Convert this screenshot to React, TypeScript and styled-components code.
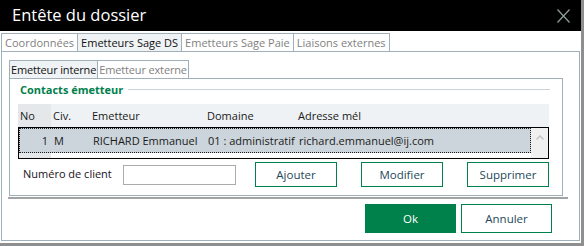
import React from 'react';
import styled, { createGlobalStyle, css } from 'styled-components';

const GREEN = '#00804b';
const TAB_BORDER = '#9fb0ba';
const UI_FONT = '"Open Sans", "Noto Sans", sans-serif';

const GlobalStyle = createGlobalStyle`
  html, body {
    margin: 0;
    padding: 0;
    background: #ffffff;
  }
  body {
    font-family: ${UI_FONT};
    font-size: 11px;
    color: #1a1a1a;
  }
`;

const Window = styled.div`
  width: 581px;
  height: 243px;
  border-right: 3px solid #8f8f8f;
  border-bottom: 3px solid #8f8f8f;
  background: #ffffff;
  display: flex;
  flex-direction: column;
`;

const TitleBar = styled.div`
  height: 31px;
  flex: none;
  background: #000000;
  display: flex;
  align-items: center;
  justify-content: space-between;
  padding: 0 11px 0 12px;
`;

const Title = styled.span`
  color: #ffffff;
  font-size: 16.5px;
  font-weight: 400;
  line-height: 1;
  margin-top: -1px;
`;

const Body = styled.div`
  flex: 1;
  display: flex;
  flex-direction: column;
  padding: 2px 1px 0 1px;
`;

const TabStrip = styled.div`
  display: flex;
  height: 18px;
`;

const Tab = styled.div<{ $active?: boolean; $compact?: boolean }>`
  height: 18px;
  box-sizing: border-box;
  border: 1px solid ${TAB_BORDER};
  border-bottom: none;
  margin-right: -1px;
  padding: 0 ${(p) => (p.$compact ? '1px' : '3px')};
  letter-spacing: ${(p) => (p.$compact ? '-0.15px' : 'normal')};
  display: flex;
  align-items: center;
  white-space: nowrap;
  color: #7f7f7f;
  background: #ffffff;
  ${(p) =>
    p.$active &&
    css`
      color: #111111;
      background: #eff3f5;
    `}
`;

const TabPanel = styled.div`
  height: 190px;
  box-sizing: border-box;
  border: 1px solid ${TAB_BORDER};
  padding: 8px 0 0 7px;
  display: flex;
  flex-direction: column;
`;

const SubPanel = styled.div`
  width: 554px;
  height: 118px;
  box-sizing: border-box;
  border: 1px solid ${TAB_BORDER};
  display: flex;
  flex-direction: column;
`;

const GroupHeader = styled.div`
  height: 18px;
  margin-top: 1px;
  padding: 0 12px 0 10px;
  display: flex;
  align-items: center;
  gap: 5px;
`;

const GroupTitle = styled.span`
  color: ${GREEN};
  font-weight: 700;
  white-space: nowrap;
`;

const GroupRule = styled.div`
  flex: 1;
  height: 1px;
  background: #c9d3d7;
  margin-top: 1px;
`;

const COLS = [33, 39, 115, 91, 0];

const GridHeader = styled.div`
  margin: 6px 0 0 8px;
  width: 531px;
  height: 23px;
  background: #eef2f4;
  display: flex;
`;

const HeaderCell = styled.div<{ $w: number; $rowHead?: boolean }>`
  ${(p) => (p.$w ? `width: ${p.$w}px;` : 'flex: 1;')}
  flex-shrink: 0;
  padding-left: 2px;
  box-sizing: border-box;
  display: flex;
  align-items: center;
  background: ${(p) => (p.$rowHead ? '#e4e8eb' : 'transparent')};
`;

const GridBox = styled.div`
  margin-left: 8px;
  width: 531px;
  height: 32px;
  box-sizing: border-box;
  border: 1px solid #000000;
  display: flex;
`;

const GridRows = styled.div`
  flex: 1;
  display: flex;
  flex-direction: column;
`;

const Row = styled.div<{ $selected?: boolean }>`
  height: 25px;
  box-sizing: border-box;
  display: flex;
  background: ${(p) => (p.$selected ? '#cdd5dc' : '#ffffff')};
  border: 1px dotted ${(p) => (p.$selected ? '#1a1a1a' : 'transparent')};
`;

const Cell = styled.div<{ $w: number; $right?: boolean }>`
  ${(p) => (p.$w ? `width: ${p.$w}px;` : 'flex: 1;')}
  flex-shrink: 0;
  box-sizing: border-box;
  display: flex;
  align-items: center;
  white-space: nowrap;
  overflow: hidden;
  ${(p) =>
    p.$right
      ? css`
          justify-content: flex-end;
          padding-right: 3px;
        `
      : css`
          padding-left: 3px;
        `}
`;

const Filler = styled.div`
  flex: 1;
  display: flex;
`;

const FillerHead = styled.div`
  width: 32px;
  background: #e4e8eb;
`;

const ScrollBar = styled.div`
  width: 17px;
  background: #f0f0f0;
  display: flex;
  justify-content: center;
  padding-top: 7px;
  box-sizing: border-box;
`;

const FormRow = styled.div`
  margin-top: 3px;
  padding-left: 13px;
  height: 25px;
  display: flex;
  align-items: center;
`;

const Label = styled.span`
  width: 100px;
  color: #1a1020;
  white-space: nowrap;
  margin-top: -3px;
`;

const TextInput = styled.div`
  width: 113px;
  height: 20px;
  box-sizing: border-box;
  border: 1px solid #ababab;
  margin-right: 19px;
  margin-top: 1px;
`;

const Button = styled.div<{ $primary?: boolean; $w: number; $h: number }>`
  width: ${(p) => p.$w}px;
  height: ${(p) => p.$h}px;
  box-sizing: border-box;
  border: 1px solid ${GREEN};
  background: ${(p) => (p.$primary ? GREEN : '#ffffff')};
  color: ${(p) => (p.$primary ? '#ffffff' : '#24485a')};
  display: flex;
  align-items: center;
  justify-content: center;
  font-size: 11.5px;
`;

const ActionButtons = styled.div`
  display: flex;
  gap: 24px;
`;

const Separator = styled.div`
  margin: 1px 0 0 -1px;
  width: 560px;
  height: 2px;
  background: #a3a3a3;
`;

const DialogButtons = styled.div`
  margin-top: 5px;
  padding-left: 356px;
  display: flex;
  gap: 5px;
`;

const CloseIcon = () => (
  <svg width="13" height="14" viewBox="0 0 13 14">
    <path d="M0.5 0.5 L12.5 13.5 M12.5 0.5 L0.5 13.5" stroke="#8b9999" strokeWidth="1.3" fill="none" />
  </svg>
);

const ChevronUp = () => (
  <svg width="8" height="5" viewBox="0 0 8 5">
    <path d="M0.5 4.5 L4 1 L7.5 4.5" stroke="#c2c2c2" strokeWidth="1.4" fill="none" />
  </svg>
);

const mainTabs = ['Coordonnées', 'Emetteurs Sage DS', 'Emetteurs Sage Paie', 'Liaisons externes'];
const subTabs = ['Emetteur interne', 'Emetteur externe'];
const headers = ['No', 'Civ.', 'Emetteur', 'Domaine', 'Adresse mél'];
const contacts = [
  { no: '1', civ: 'M', name: 'RICHARD Emmanuel', domain: '01 : administratif', mail: 'richard.emmanuel@ij.com' },
];

export default function App() {
  return (
    <>
      <GlobalStyle />
      <Window>
        <TitleBar>
          <Title>Entête du dossier</Title>
          <CloseIcon />
        </TitleBar>
        <Body>
          <TabStrip>
            {mainTabs.map((t, i) => (
              <Tab key={t} $active={i === 1}>
                {t}
              </Tab>
            ))}
          </TabStrip>
          <TabPanel>
            <TabStrip>
              {subTabs.map((t, i) => (
                <Tab key={t} $active={i === 0} $compact>
                  {t}
                </Tab>
              ))}
            </TabStrip>
            <SubPanel>
              <GroupHeader>
                <GroupTitle>Contacts émetteur</GroupTitle>
                <GroupRule />
              </GroupHeader>
              <GridHeader>
                {headers.map((h, i) => (
                  <HeaderCell key={h} $w={COLS[i]} $rowHead={i === 0}>
                    {h}
                  </HeaderCell>
                ))}
              </GridHeader>
              <GridBox>
                <GridRows>
                  {contacts.map((c) => (
                    <Row key={c.no} $selected>
                      <Cell $w={COLS[0] - 2} $right>
                        {c.no}
                      </Cell>
                      <Cell $w={COLS[1]}>{c.civ}</Cell>
                      <Cell $w={COLS[2]}>{c.name}</Cell>
                      <Cell $w={COLS[3]}>{c.domain}</Cell>
                      <Cell $w={0}>{c.mail}</Cell>
                    </Row>
                  ))}
                  <Filler>
                    <FillerHead />
                  </Filler>
                </GridRows>
                <ScrollBar>
                  <ChevronUp />
                </ScrollBar>
              </GridBox>
              <FormRow>
                <Label>Numéro de client</Label>
                <TextInput />
                <ActionButtons>
                  <Button $w={82} $h={25}>Ajouter</Button>
                  <Button $w={82} $h={25}>Modifier</Button>
                  <Button $w={82} $h={25}>Supprimer</Button>
                </ActionButtons>
              </FormRow>
            </SubPanel>
            <Separator />
            <DialogButtons>
              <Button $primary $w={91} $h={29}>
                Ok
              </Button>
              <Button $w={91} $h={29}>Annuler</Button>
            </DialogButtons>
          </TabPanel>
        </Body>
      </Window>
    </>
  );
}
